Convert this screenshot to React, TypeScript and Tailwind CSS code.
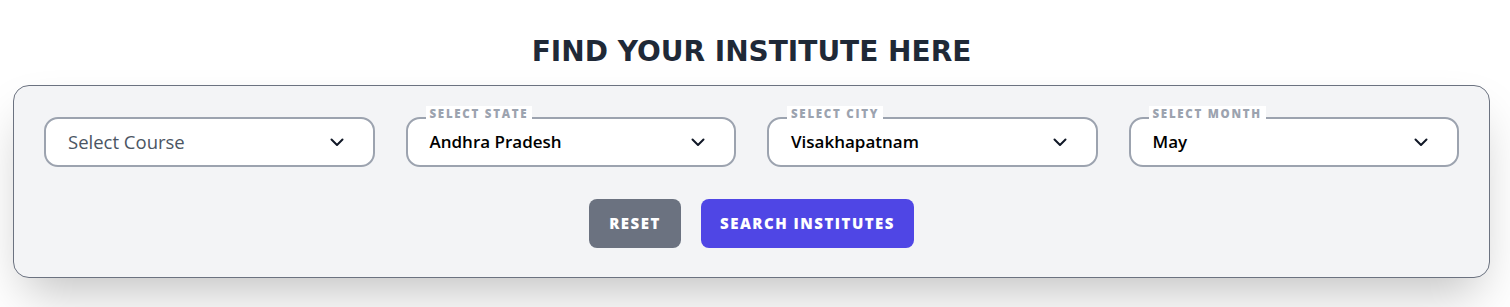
import React from "react";

function Chevron() {
  return (
    <svg width="14" height="9" viewBox="0 0 14 9" fill="none" className="shrink-0">
      <path d="M1.5 1.5L7 7L12.5 1.5" stroke="#111827" strokeWidth="2" strokeLinecap="round" strokeLinejoin="round" />
    </svg>
  );
}

function SelectBox({ label, value, placeholder }: { label?: string; value?: string; placeholder?: string }) {
  return (
    <div className="relative">
      {label && (
        <span className="absolute left-[20px] top-[-11px] z-10 bg-white px-[4px] pt-[2px] text-[11.5px] leading-[12px] font-extrabold tracking-[0.15em] text-[#9ca3af]">
          {label}
        </span>
      )}
      <div className="flex h-[50px] items-center justify-between rounded-[14px] border-2 border-[#9ca3af] bg-white pl-[22px] pr-[29px]">
        {value ? (
          <span className="text-[17px] font-semibold text-black">{value}</span>
        ) : (
          <span className="text-[18.5px] text-[#4b5563]">{placeholder}</span>
        )}
        <Chevron />
      </div>
    </div>
  );
}

export default function App() {
  return (
    <div className="min-h-[307px] bg-white pl-[13px] pr-[20px] pt-[34px] pb-[30px]" style={{ fontFamily: "'Open Sans', 'Liberation Sans', sans-serif" }}>
      <h2
        className="mb-[15px] text-center text-[28px] leading-[36px] font-bold text-[#1f2937]"
        style={{ fontFamily: "'DejaVu Sans', 'Liberation Sans', sans-serif" }}
      >
        FIND YOUR INSTITUTE HERE
      </h2>
      <div className="rounded-[16px] border border-[#6b7280] bg-[#f3f4f6] px-[30px] pt-[31px] pb-[29px] shadow-2xl">
        <div className="grid grid-cols-4 gap-[31px]">
          <SelectBox placeholder="Select Course" />
          <SelectBox label="SELECT STATE" value="Andhra Pradesh" />
          <SelectBox label="SELECT CITY" value="Visakhapatnam" />
          <SelectBox label="SELECT MONTH" value="May" />
        </div>
        <div className="mt-8 flex justify-center gap-5">
          <button className="h-[49px] w-[92px] rounded-[8px] bg-[#6b7280] text-[15px] font-extrabold tracking-[0.1em] text-white">
            RESET
          </button>
          <button className="h-[49px] w-[213px] rounded-[8px] bg-[#4f46e5] text-[15px] font-extrabold tracking-[0.1em] text-white">
            SEARCH INSTITUTES
          </button>
        </div>
      </div>
    </div>
  );
}
